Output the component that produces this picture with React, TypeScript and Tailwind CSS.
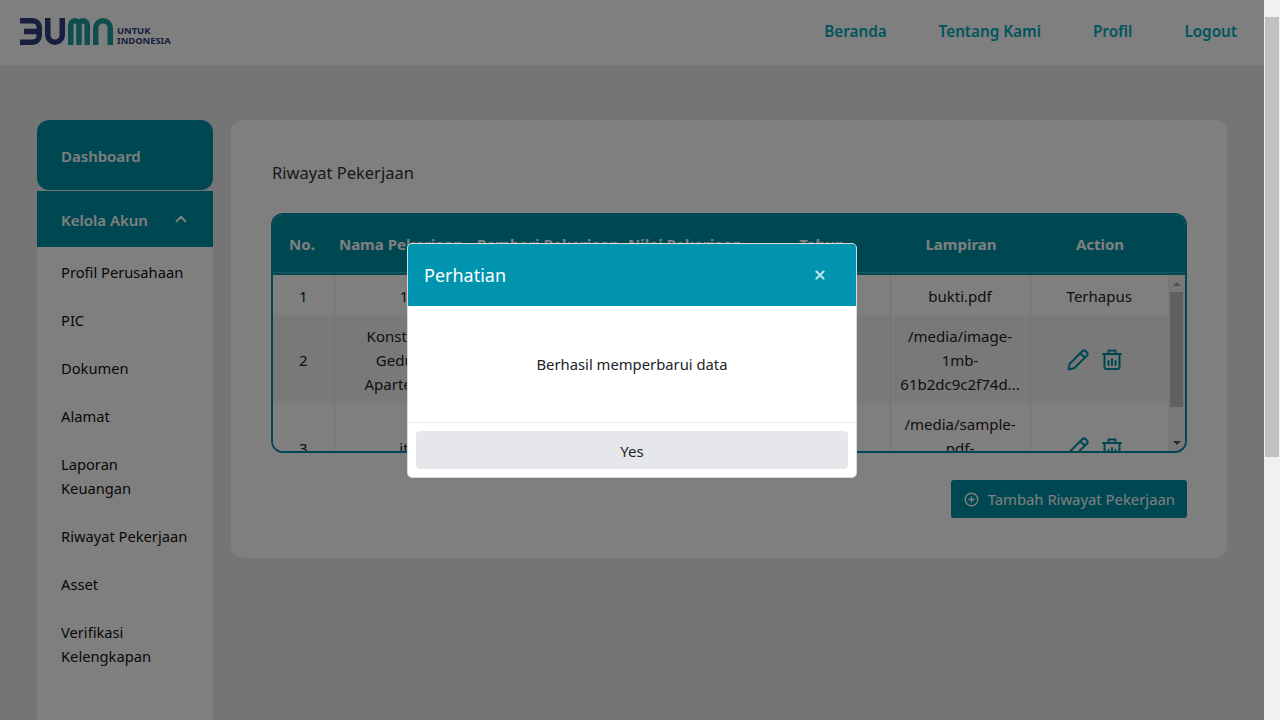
import React from 'react';
import { ChevronUp, CirclePlus, X } from 'lucide-react';

const font = "font-['Noto_Sans',sans-serif]";

const sideItems = [
  'Profil Perusahaan',
  'PIC',
  'Dokumen',
  'Alamat',
  'Laporan Keuangan',
  'Riwayat Pekerjaan',
  'Asset',
  'Verifikasi Kelengkapan',
];

const heads = [
  { label: 'No.', width: 'w-[58px]' },
  { label: 'Nama Pekerjaan', width: 'w-[140px]' },
  { label: 'Pemberi Pekerjaan', width: 'w-[154px]' },
  { label: 'Nilai Pekerjaan', width: 'w-[120px]' },
  { label: 'Tahun', width: 'w-[154px]' },
  { label: 'Lampiran', width: 'w-[124px]' },
  { label: 'Action', width: '' },
];

const rows = [
  { no: '1', name: ['1'], file: ['bukti.pdf'], h: 'h-[41px]', stripe: false, deleted: true },
  { no: '2', name: ['Konstruksi', 'Gedung', 'Apartemen'], file: ['/media/image-', '1mb-', '61b2dc9c2f74d...'], h: 'h-[87px]', stripe: true, deleted: false },
  { no: '3', name: ['it'], file: ['/media/sample-', 'pdf-', '\u00a0'], h: 'h-[90px]', stripe: false, deleted: false },
];

const PencilIcon = () => (
  <svg width="22" height="22" viewBox="0 0 22 22" fill="none" stroke="#0090a3" strokeWidth="2" strokeLinejoin="round" strokeLinecap="round">
    <path d="M1.500 20.500l1.200-5.700L15.300 2.200a2.500 2.500 0 0 1 3.500 0l1 1a2.500 2.500 0 0 1 0 3.500L7.200 19.300z" />
    <path d="M13.300 4.200l4.500 4.500" />
  </svg>
);

const TrashIcon = () => (
  <svg width="20" height="21" viewBox="0 0 20 21" fill="none" stroke="#0090a3" strokeWidth="2" strokeLinecap="round" strokeLinejoin="round">
    <path d="M1 5h18" />
    <path d="M6.500 5V1.500h7V5" />
    <path d="M2.500 5v13a2 2 0 0 0 2 2h11a2 2 0 0 0 2-2V5" />
    <path d="M6.500 12v4M10 10v6M13.500 12v4" />
  </svg>
);

const Logo = () => (
  <div className="flex items-end gap-[4px] pb-[2px]">
    <svg width="93" height="27" viewBox="0 0 93 27" fill="none" strokeWidth="5.500">
      <path d="M0 2.750h12.500a6.750 6.750 0 0 1 6.750 6.750v8a6.750 6.750 0 0 1-6.750 6.750H0M4 13.500h15" stroke="#2f3d7c" />
      <path d="M27.750 0v17a7.250 7.250 0 0 0 14.500 0V0" stroke="#2f3d7c" />
      <path d="M50.750 27V6.875a4.125 4.125 0 0 1 8.250 0V27M59 6.875a4.125 4.125 0 0 1 8.250 0V27" stroke="#1f9c9c" />
      <path d="M75.750 27V10a7.250 7.250 0 0 1 14.500 0V27" stroke="#1f9c9c" />
    </svg>
    <div className="text-[9.400px] leading-[10px] font-bold text-[#2f3d7c] -mb-px">
      <div>UNTUK</div>
      <div>INDONESIA</div>
    </div>
  </div>
);

const Sidebar = () => (
  <aside className="w-[176px] shrink-0 flex flex-col">
    <div className="h-[70px] shrink-0 rounded-xl bg-[#0090a3] flex items-center pl-6 pt-[2px] font-semibold text-[15px] text-white">Dashboard</div>
    <div className="mt-px h-[56px] shrink-0 bg-[#0090a3] flex items-center justify-between pl-6 pr-[23px] font-semibold text-[15px] text-white">
      <span className="pt-[2px]">Kelola Akun</span>
      <ChevronUp size={18} strokeWidth={2.500} className="-mt-px" />
    </div>
    <div className="flex-1 bg-white pt-px pb-10">
      {sideItems.map((item) => (
        <div key={item} className="pl-6 pr-[22px] py-3 text-[#111] text-[14.700px] leading-6">{item}</div>
      ))}
    </div>
  </aside>
);

const HistoryTable = () => (
  <div className="h-[240px] rounded-xl overflow-hidden border-2 border-[#0090a3] flex flex-col">
    <div className="shrink-0 bg-[#0090a3] pr-[8px]">
      <table className="w-full table-fixed text-white font-bold">
        <thead>
          <tr className="h-[57px]">
            {heads.map((h) => (
              <th key={h.label} className={`${h.width} pt-[2px] text-center whitespace-nowrap`}>{h.label}</th>
            ))}
          </tr>
        </thead>
      </table>
    </div>
    <div className="h-px shrink-0 bg-[#33aebe]" />
    <div className="h-[2px] shrink-0 bg-[#0090a3]" />
    <div className="flex-1 flex min-h-0">
      <div className="flex-1 overflow-hidden bg-white">
        <table className="w-full table-fixed text-[#222] text-center leading-6">
          <tbody>
            {rows.map((r) => (
              <tr key={r.no} className={`${r.h} ${r.stripe ? 'bg-[#f2f2f2]' : 'bg-white'}`}>
                <td className="w-[61px] border-r border-[#e4e4e4]">{r.no}</td>
                <td className="w-[140px] border-r border-[#e4e4e4]">
                  {r.name.map((line) => <div key={line}>{line}</div>)}
                </td>
                <td className="w-[416px] border-r border-[#e4e4e4]" />
                <td className="w-[140px] border-r border-[#e4e4e4]">
                  {r.file.map((line) => <div key={line} className="whitespace-nowrap">{line}</div>)}
                </td>
                <td>
                  {r.deleted ? 'Terhapus' : (
                    <div className="flex justify-center items-center gap-[13px] pr-[10px]">
                      <PencilIcon />
                      <TrashIcon />
                    </div>
                  )}
                </td>
              </tr>
            ))}
          </tbody>
        </table>
      </div>
      <div className="w-[17px] shrink-0 bg-[#f1f1f1] flex flex-col items-center">
        <div className="h-[17px] flex items-center justify-center">
          <div className="border-x-[4px] border-x-transparent border-b-[4px] border-b-[#a3a3a3]" />
        </div>
        <div className="w-[13px] h-[115px] bg-[#c1c1c1]" />
        <div className="flex-1" />
        <div className="h-[17px] flex items-center justify-center">
          <div className="border-x-[4px] border-x-transparent border-t-[4px] border-t-[#505050]" />
        </div>
      </div>
    </div>
  </div>
);

const Modal = () => (
  <div className="absolute left-[407px] top-[243px] w-[450px] h-[235px] bg-white rounded-[5px] border border-[#d8d8d8] overflow-hidden flex flex-col">
    <div className="h-[62px] shrink-0 bg-[#0094af] flex items-center justify-between pl-4 pr-[29px] text-white">
      <span className="text-[18px]">Perhatian</span>
      <X size={14} strokeWidth={4} className="text-[#b5e0e8]" />
    </div>
    <div className="flex-1 flex items-center justify-center text-[14.800px] text-[#212529] pt-[1px]">Berhasil memperbarui data</div>
    <div className="h-[55px] shrink-0 border-t border-[#e9ecef] px-2 pt-2">
      <button className="w-full h-[38px] pt-[2px] rounded bg-[#e5e7eb] text-[#212529]">Yes</button>
    </div>
  </div>
);

const App: React.FC = () => {
  return (
    <div className={`${font} relative h-[720px] w-[1280px] overflow-hidden flex text-[15px]`}>
      <div className="relative w-[1264px] shrink-0 bg-[#ebebeb] flex flex-col">
        <header className="h-[65px] shrink-0 bg-white pl-5 pr-[27px] flex items-center justify-between">
          <Logo />
          <nav className="flex gap-[52px] pb-[2px] text-[15.250px] font-semibold text-[#00aac0]">
            <span>Beranda</span>
            <span>Tentang Kami</span>
            <span>Profil</span>
            <span>Logout</span>
          </nav>
        </header>
        <div className="flex-1 min-h-0 flex gap-[18px] pl-[37px] pr-[37px] pt-[55px]">
          <Sidebar />
          <main className="flex-1 self-start h-[438px] rounded-xl bg-white px-10 pt-[41px]">
            <h1 className="text-[#333] text-[16.500px] leading-6 mb-[28px] pl-px">Riwayat Pekerjaan</h1>
            <HistoryTable />
            <div className="flex justify-end mt-[27px]">
              <button className="h-[38px] rounded-[3px] bg-[#0090a3] text-white pl-[13px] pr-3 flex items-center gap-[9px] text-[14.850px]">
                <CirclePlus size={15} strokeWidth={2.250} />
                Tambah Riwayat Pekerjaan
              </button>
            </div>
          </main>
        </div>
        <div className="absolute inset-0 bg-black/50" />
        <Modal />
      </div>
      <div className="w-[16px] shrink-0 bg-[#f1f1f1] flex flex-col items-center">
        <div className="h-[17px]" />
        <div className="w-[14px] h-[440px] bg-[#c1c1c1]" />
      </div>
    </div>
  );
};

export default App;
